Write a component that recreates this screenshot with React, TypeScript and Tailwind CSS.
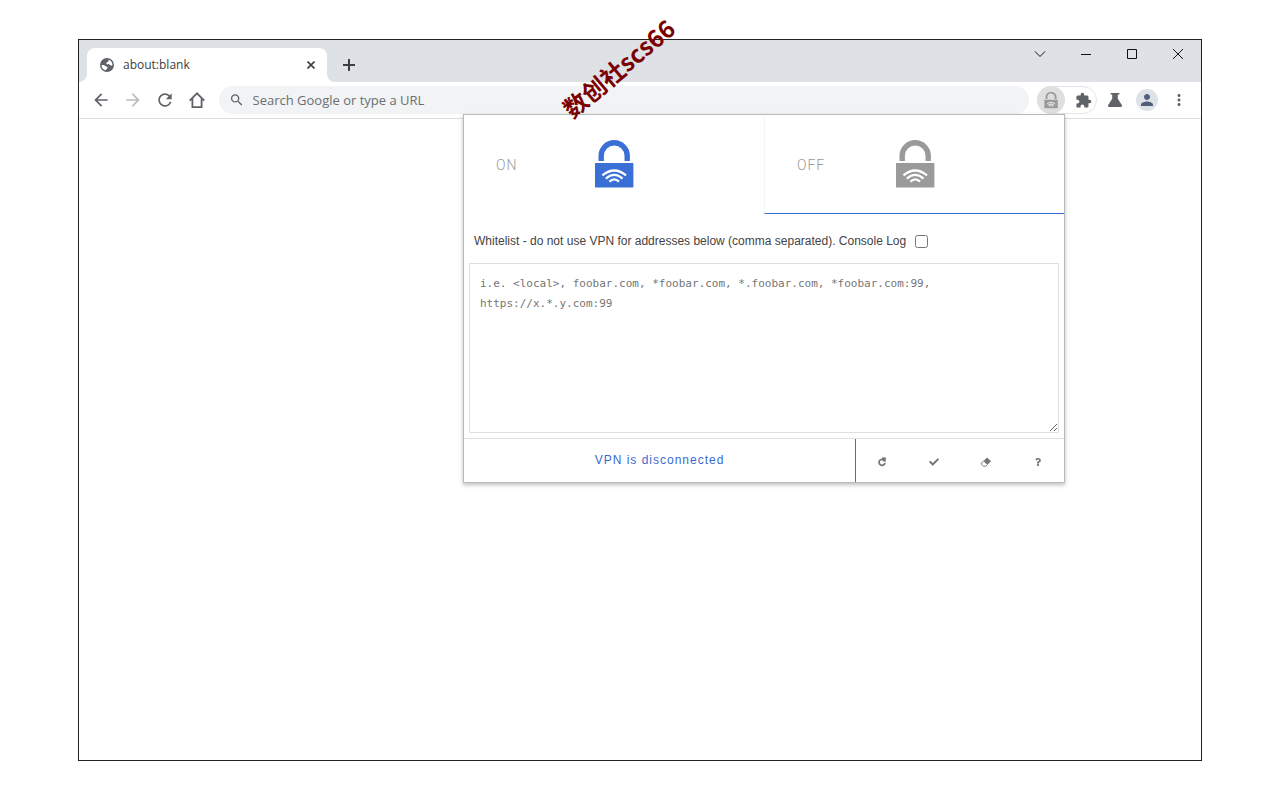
import type { ReactNode } from "react";
import { FaCheck, FaQuestion } from "react-icons/fa";
import {
  MdArrowBack,
  MdArrowForward,
  MdExtension,
  MdMoreVert,
  MdPerson,
  MdRefresh,
  MdSearch,
} from "react-icons/md";

function LockIcon({ className }: { className: string }) {
  return (
    <svg viewBox="0 0 40 50" className={className} aria-hidden="true">
      <path d="M7.2 22V16.8a13 13 0 0 1 26 0V22" fill="none" stroke="currentColor" strokeWidth="5.4" />
      <rect x="1" y="24" width="38.4" height="24.6" rx="0.6" fill="currentColor" />
      <g fill="none" stroke="#fff" strokeWidth="2.3">
        <path d="M8.4 36.4Q20.2 26.6 32 36.4" />
        <path d="M11.9 39.6Q20.2 32.2 28.5 39.6" />
        <path d="M15.4 42.6Q20.2 38.2 25 42.6" />
      </g>
    </svg>
  );
}

function GlobeIcon() {
  return (
    <svg viewBox="0 0 16 16" className="size-4" aria-hidden="true">
      <circle cx="8" cy="8" r="7" fill="#5f6368" />
      <path
        d="M2.500 8.200C4.200 7.800 5.800 8.400 6.600 9.300C7.300 10 8.700 9.600 8.600 10.600C8.500 11.800 7.200 11.800 7 13.300C4.500 13 2.500 11 2.500 8.200Z"
        fill="#fff"
      />
      <path
        d="M9.800 2.800C12 3.600 13.500 5.600 13.500 8C12.800 8.800 11.600 8.700 11 7.900C10.300 7 8.500 7.800 7.600 6.900C6.900 6 7.600 5.100 8.600 5C9.600 4.900 9.300 3.800 9.800 2.800Z"
        fill="#fff"
      />
    </svg>
  );
}

function FlaskIcon() {
  return (
    <svg viewBox="0 0 16 16" className="size-4" fill="currentColor" aria-hidden="true">
      <path d="M3.600 1h8.800v1.600h-1.600v4.200l4 6.200c.6 1 0 2-1.100 2H2.300c-1.100 0-1.700-1-1.100-2l4-6.200V2.600H3.600z" />
    </svg>
  );
}

function ToolButton({ label, className = "text-[#5f6368]", children }: { label: string; className?: string; children: ReactNode }) {
  return (
    <button type="button" aria-label={label} className={`flex h-7 w-8 shrink-0 items-center justify-center ${className}`}>
      {children}
    </button>
  );
}

function WindowButton({ label, children }: { label: string; children: ReactNode }) {
  return (
    <button type="button" aria-label={label} className="flex h-7 w-[46px] items-center justify-center">
      <svg viewBox="0 0 12 12" className="size-3" fill="none" stroke="#111" strokeWidth="1" aria-hidden="true">
        {children}
      </svg>
    </button>
  );
}

function TabStrip() {
  return (
    <div className="flex h-[42px] shrink-0 justify-between bg-[#dee1e6]">
      <div className="flex items-end pl-2">
        <div className="relative flex h-[34px] w-60 items-center rounded-t-lg bg-white pr-2 pl-3">
          <svg viewBox="0 0 8 8" className="absolute bottom-0 -left-2 size-2" aria-hidden="true">
            <path d="M8 0V8H0A8 8 0 0 0 8 0" fill="#fff" />
          </svg>
          <svg viewBox="0 0 8 8" className="absolute -right-2 bottom-0 size-2" aria-hidden="true">
            <path d="M0 0V8H8A8 8 0 0 1 0 0" fill="#fff" />
          </svg>
          <GlobeIcon />
          <span className="flex-1 pl-2 font-['Open_Sans',sans-serif] text-xs text-[#3c4043]">about:blank</span>
          <button type="button" aria-label="Close tab" className="flex size-4 items-center justify-center">
            <svg viewBox="0 0 8 8" className="size-2" stroke="#3c4043" strokeWidth="1.6" aria-hidden="true">
              <path d="M0.500 0.500 7.500 7.500M7.500 0.500 0.500 7.500" />
            </svg>
          </button>
        </div>
        <button type="button" aria-label="New tab" className="ml-2 flex h-[34px] w-7 items-center justify-center">
          <svg viewBox="0 0 12 12" className="size-3" stroke="#3c4043" strokeWidth="2" aria-hidden="true">
            <path d="M6 0V12M0 6H12" />
          </svg>
        </button>
      </div>
      <div className="flex">
        <WindowButton label="Search tabs">
          <path d="M1 3.500 6 8.500 11 3.500" />
        </WindowButton>
        <WindowButton label="Minimize">
          <path d="M1 6.500H11" />
        </WindowButton>
        <WindowButton label="Maximize">
          <path d="M1.500 1.500H10.500V10.500H1.500Z" />
        </WindowButton>
        <WindowButton label="Close">
          <path d="M1 1 11 11M11 1 1 11" />
        </WindowButton>
      </div>
    </div>
  );
}

function Toolbar() {
  return (
    <div className="flex h-[37px] shrink-0 items-center border-b border-[#dadce0] px-1.5">
      <ToolButton label="Back">
        <MdArrowBack className="size-5" />
      </ToolButton>
      <ToolButton label="Forward" className="text-[#babcbe]">
        <MdArrowForward className="size-5" />
      </ToolButton>
      <ToolButton label="Reload">
        <MdRefresh className="size-5" />
      </ToolButton>
      <ToolButton label="Home">
        <svg viewBox="0 0 16 16" className="size-4" fill="none" stroke="currentColor" strokeWidth="1.8" aria-hidden="true">
          <path d="M0.700 8.600 8 1.300 15.300 8.600M3.400 6.500V15.100H12.600V6.500" />
        </svg>
      </ToolButton>
      <label className="mx-1.5 flex h-7 flex-1 items-center gap-2 rounded-full bg-[#f1f3f4] pl-2.5">
        <MdSearch className="size-4 text-[#5f6368]" />
        <input
          type="text"
          aria-label="Address"
          placeholder="Search Google or type a URL"
          className="w-full bg-transparent pt-px font-['Open_Sans',sans-serif] text-[13px] outline-none placeholder:text-[#6b6f73]"
        />
      </label>
      <div className="mx-0.5 flex h-7 w-[60px] rounded-full border border-[#e3e5e8]">
        <button
          type="button"
          aria-label="VPN extension"
          className="-m-px flex size-7 items-center justify-center rounded-full bg-[#dfdfdf] text-[#9a9a9a]"
        >
          <LockIcon className="h-[18px] w-3.5" />
        </button>
        <button type="button" aria-label="Extensions" className="flex flex-1 items-center justify-center pl-1.5 text-[#5f6368]">
          <MdExtension className="size-[17px]" />
        </button>
      </div>
      <ToolButton label="Experiments">
        <FlaskIcon />
      </ToolButton>
      <ToolButton label="Profile" className="text-[#50607a]">
        <span className="flex size-[22px] items-center justify-center rounded-full bg-[#dee1e6]">
          <MdPerson className="size-[18px]" />
        </span>
      </ToolButton>
      <ToolButton label="Menu">
        <MdMoreVert className="size-[18px]" />
      </ToolButton>
    </div>
  );
}

function FooterButton({ label, children }: { label: string; children: ReactNode }) {
  return (
    <button type="button" aria-label={label} className="flex w-[52px] items-center justify-center pt-0.5 text-[#757575]">
      {children}
    </button>
  );
}

function VpnPopup() {
  return (
    <section className="absolute top-[74px] right-[136px] w-[602px] border border-[#b9babc] bg-white font-['Liberation_Sans',sans-serif] shadow-[0_2px_4px_rgba(0,0,0,0.25)]">
      <div className="grid grid-cols-2 font-['Roboto',sans-serif] text-sm font-light tracking-[1px] text-[#999]">
        <button type="button" className="flex h-[99px] items-center border-b border-transparent pl-8 text-left">
          <span className="w-[98px] pt-0.5">ON</span>
          <LockIcon className="h-[50px] w-10 text-[#3a70d6]" />
        </button>
        <button type="button" className="flex h-[99px] items-center border-b border-l border-b-[#3a70d6] border-l-[#f5f5f5] pl-8 text-left">
          <span className="w-[98px] pt-0.5">OFF</span>
          <LockIcon className="h-[50px] w-10 text-[#9a9a9a]" />
        </button>
      </div>
      <div className="flex h-[49px] items-center gap-[9px] pt-[5px] pl-2.5 text-xs text-[#444]">
        <label htmlFor="console-log">
          Whitelist - do not use VPN for addresses below (comma separated). Console Log
        </label>
        <input id="console-log" type="checkbox" className="size-[13px]" />
      </div>
      <div className="px-[5px] pb-[5px]">
        <textarea
          aria-label="Whitelist addresses"
          placeholder="i.e. <local>, foobar.com, *foobar.com, *.foobar.com, *foobar.com:99, https://x.*.y.com:99"
          className="block h-[170px] w-full resize border border-[#e0e0e0] p-2.5 font-['DejaVu_Sans_Mono',monospace] text-[11px] leading-5 outline-none placeholder:text-[#757575]"
        />
      </div>
      <div className="flex h-11 border-t border-[#e0e0e0]">
        <p className="flex flex-1 items-center justify-center border-r border-[#3a70d6] pb-px text-xs tracking-[1px] text-[#3a6ad0]">
          VPN is disconnected
        </p>
        <FooterButton label="Refresh">
          <svg viewBox="0 0 10 10" className="size-2.5" aria-hidden="true">
            <path d="M5.600 2.400A3 3 0 1 0 8 5.800" fill="none" stroke="currentColor" strokeWidth="1.7" />
            <path d="M5 0.400H8.800V4.600H5Z" fill="currentColor" />
            <path d="M4.800 4.700 7.200 4.700 4.800 2.900Z" fill="#fff" />
          </svg>
        </FooterButton>
        <FooterButton label="Apply">
          <FaCheck className="size-2.5" />
        </FooterButton>
        <FooterButton label="Clear">
          <svg viewBox="0 0 12 10" className="h-2.5 w-3" aria-hidden="true">
            <path d="M7 0.600 11 4.200 7.700 7.500 3.600 3.900Z" fill="currentColor" />
            <path d="M3.600 4 7.500 7.400 5.700 9.200H3.500L1.200 7V6.300Z" fill="#fff" stroke="currentColor" strokeWidth="1" />
          </svg>
        </FooterButton>
        <FooterButton label="Help">
          <FaQuestion className="size-2" />
        </FooterButton>
      </div>
    </section>
  );
}

export default function App() {
  return (
    <main className="relative flex min-h-screen flex-col bg-white px-[78px] py-[39px]">
      <div className="relative flex flex-1 flex-col border border-[#222]">
        <TabStrip />
        <Toolbar />
        <VpnPopup />
        <span className="absolute top-3 left-[471px] -rotate-40 font-['Noto_Sans_CJK_SC',sans-serif] text-2xl font-bold whitespace-nowrap text-[#7b0000]">
          数创社scs66
        </span>
      </div>
    </main>
  );
}
